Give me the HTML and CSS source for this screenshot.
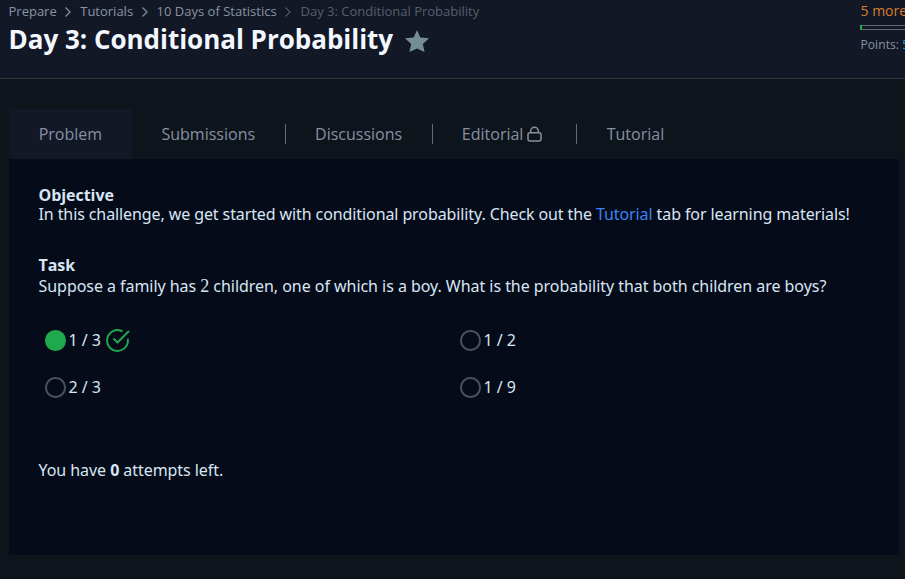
FILE: index.html
```html
<!DOCTYPE html>
<html lang="en">
<head>
<meta charset="utf-8">
<title>Day 3: Conditional Probability</title>
<link rel="stylesheet" href="styles.css">
</head>
<body>
<header class="header">
  <div class="heading">
    <nav class="crumbs">
      <a>Prepare</a>
      <svg class="chevron" viewBox="0 0 8 12"><path d="M1.5 1.5 6 6 1.5 10.5"/></svg>
      <a>Tutorials</a>
      <svg class="chevron" viewBox="0 0 8 12"><path d="M1.5 1.5 6 6 1.5 10.5"/></svg>
      <a>10 Days of Statistics</a>
      <svg class="chevron dim" viewBox="0 0 8 12"><path d="M1.5 1.5 6 6 1.5 10.5"/></svg>
      <span class="current">Day 3: Conditional Probability</span>
    </nav>
    <div class="title-row">
      <h1>Day 3: Conditional Probability</h1>
      <svg class="star" viewBox="0 0 24 22"><path d="M12 0 15.3 7.5 24 8.3 17.8 14 19.6 22 12 18.4 4.4 22 6.2 14 0 8.3 8.7 7.5Z"/></svg>
    </div>
  </div>
  <aside class="progress">
    <div class="more">5 more challenges</div>
    <div class="bar"><div class="fill"></div></div>
    <div class="points">Points: <span class="score">50</span></div>
  </aside>
</header>
<main>
  <nav class="tabs">
    <a class="tab active">Problem</a>
    <a class="tab">Submissions</a>
    <a class="tab divided">Discussions</a>
    <a class="tab divided editorial">Editorial
      <svg class="lock" viewBox="0 0 15 16"><rect x="1" y="6.7" width="13" height="8.3" rx="2"/><path d="M3.7 6.5V5a3.8 3.8 0 0 1 7.6 0v1.5"/></svg>
    </a>
    <a class="tab divided">Tutorial</a>
  </nav>
  <section class="panel">
    <h2>Objective</h2>
    <p class="objective">In this challenge, we get started with conditional probability. Check out the <a class="link">Tutorial</a> tab for learning materials!</p>
    <h2>Task</h2>
    <p class="task">Suppose a family has <span class="math">2</span> children, one of which is a boy. What is the probability that both children are boys?</p>
    <div class="options">
      <div class="option"><span class="radio selected"></span><span class="label">1 / 3</span>
        <svg class="check" viewBox="0 0 24 24"><path d="M22 11.1V12a10 10 0 1 1-5.9-9.1"/><path d="M22.5 3.4 12 13.9 8.6 10.5"/></svg>
      </div>
      <div class="option"><span class="radio"></span><span class="label">1 / 2</span></div>
      <div class="option"><span class="radio"></span><span class="label">2 / 3</span></div>
      <div class="option"><span class="radio"></span><span class="label">1 / 9</span></div>
    </div>
    <p class="attempts">You have <b>0</b> attempts left.</p>
  </section>
</main>
</body>
</html>
```
FILE: styles.css
```css
* { box-sizing: border-box; }
html, body { height: 100%; }
body {
  margin: 0;
  overflow: hidden;
  background: #0e141c;
  color: #d8e6f4;
  font: 16px/20px "Noto Sans", "Open Sans", sans-serif;
}
h1, h2, p { margin: 0; }
svg { fill: none; flex: none; }
.header {
  display: flex;
  height: 79px;
  overflow: hidden;
  padding-left: 8.5px;
  background: #121826;
  border-bottom: 1px solid #39393c;
}
.heading { width: 851.5px; flex: none; }
.crumbs {
  display: flex;
  align-items: center;
  height: 23px;
  font: 13px/23px "Open Sans", sans-serif;
  color: #8b93a3;
  white-space: nowrap;
}
.chevron { width: 8px; height: 12px; margin: 1px 7.8px 0 7.7px; stroke: #8b93a3; stroke-width: 1.2; }
.dim { margin-right: 8.3px; stroke: #4e5663; }
.current { color: #575f6c; }
.title-row { display: flex; height: 34px; }
h1 { font: 700 26px/33px "Open Sans", sans-serif; letter-spacing: -0.02px; color: #f3f7ff; white-space: nowrap; }
.star { width: 24px; height: 22px; margin: 7px 0 0 11.5px; fill: #738f93; }
.progress { width: 180px; flex: none; white-space: nowrap; }
.more { padding-left: 0.5px; font: 14px/22px "Open Sans", sans-serif; color: #d87e2c; }
.bar { height: 5px; margin-top: 3px; border: 1px solid #656873; border-left: 0; }
.fill { width: 2px; height: 5px; margin-top: -1px; background: #1fa84c; }
.points { margin-top: 6px; padding-left: 0.5px; font: 12px/18px "Open Sans", sans-serif; letter-spacing: 0.08px; color: #8b93a3; }
.score { color: #1ba0dc; }
main { padding: 30px 6px 0 9px; }
.tabs { display: flex; height: 50px; color: #8790a0; font-family: "Open Sans", sans-serif; }
.tab { display: flex; align-items: center; padding: 0 29.7px; }
.tab.divided { padding-left: 30.3px; }
.active { background: #121826; }
.divided {
  background: linear-gradient(#666b73, #666b73) left center / 1px 20px no-repeat;
}
.tab.editorial { padding-right: 34px; padding-left: 30px; }
.lock { width: 15px; height: 16px; margin-left: 4px; stroke: #8790a0; stroke-width: 1.5; }
.panel { height: 396px; padding: 26px 29.5px; background: #050b19; white-space: nowrap; }
h2 { font: 700 16px/20px "Open Sans", sans-serif; letter-spacing: -0.05px; }
.objective { margin-bottom: 31px; line-height: 19px; letter-spacing: -0.1px; }
.link { color: #3b82f6; }
.task { line-height: 22px; letter-spacing: -0.045px; }
.math { font: 18px/20px "Liberation Serif", serif; }
.options { display: grid; grid-template-columns: 415px 415px; grid-template-rows: 47px 47px; margin: 20px 0 0 6.5px; }
.option { display: flex; align-items: center; }
.radio { width: 20.5px; height: 20.5px; margin-right: 3px; border: 2px solid #4b525f; border-radius: 50%; }
.selected { border-color: #1fa84c; background: #1fa84c; }
.label { padding-bottom: 1px; letter-spacing: -0.05px; }
.check { width: 25px; height: 25px; margin-left: 4.5px; stroke: #1fa84c; stroke-width: 1.9; stroke-linecap: round; stroke-linejoin: round; }
.attempts { margin-top: 49px; letter-spacing: -0.06px; }
```
